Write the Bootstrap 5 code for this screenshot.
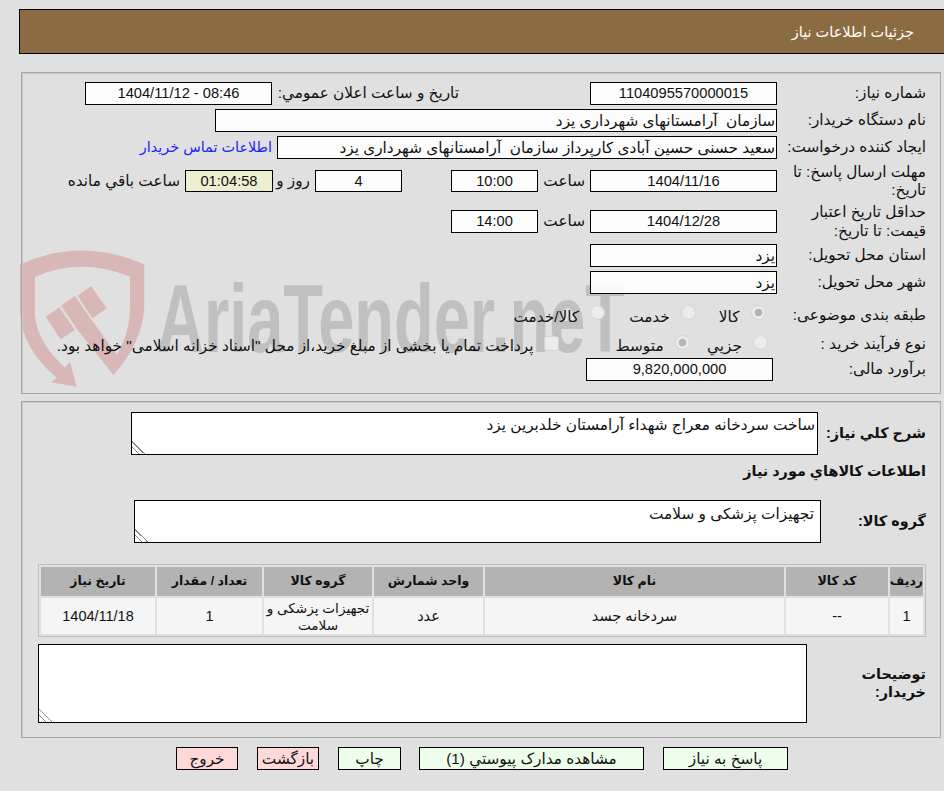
<!DOCTYPE html>
<html lang="fa" dir="rtl">
<head>
<meta charset="utf-8">
<title>جزئیات اطلاعات نیاز</title>
<link href="https://cdn.jsdelivr.net/npm/bootstrap@5.3.0/dist/css/bootstrap.min.css" rel="stylesheet">
<style>
html,body{background:#e0e0e0;overflow:hidden}
body{font-family:"Liberation Sans","DejaVu Sans",sans-serif;font-size:15.3px;color:#111;width:944px;height:791px;position:relative;line-height:18.5px}
.wm{position:absolute;left:0;top:0}
.page-wrap{position:relative;padding:9px 0 0 19px}
.head-bar{height:45px;background:#8b6b42;border:1px solid #000;border-right:0;color:#fff;padding:1px 30px 0 0;font-size:14.5px}
.pane{border:1px solid #a6a6a6;margin:18px 3px 0 2px;padding:9px 0 0 0;box-shadow:inset 1px 1px 0 #c8c8c8}
.pane-one{height:322px}
.pane-two{height:337px;margin-top:7px;padding-top:10px}
.fld{margin-bottom:4px;min-height:23px}
.lbl{width:163px;flex:none;padding-right:14px;padding-left:8px}
.box{height:23px;border:1px solid #000;background:rgba(255,255,255,.9);text-align:center;flex:none;line-height:21px;white-space:nowrap;overflow:hidden}
.box.rt{text-align:right;padding-right:1px}
.num{font-size:14.67px}
.w187{width:187px}.w87{width:87px}.w88{width:88px}
.w562{width:562px}.w500{width:500px}
.cnt{background:#eeeed1}
.tall{min-height:37px}
.tall.short{min-height:36px}
.short .lbl{line-height:18px}
.short .box{height:22px;line-height:20px}
.nw{white-space:nowrap}
.pub-l{margin-right:131px;white-space:nowrap}
.pub-b{margin:0 auto 0 63px}
.cnt-link{margin-right:5px;color:#2222ff;font-size:14.4px}
.hr-l{width:42px;margin:0 5px;white-space:nowrap}
.sp49{width:49px;flex:none}
.day-l{width:42px;flex:none;padding-right:5px;white-space:nowrap}
.rem-l{margin-right:5px;white-space:nowrap}
.pick{height:23px}
.pick-a{margin-top:10px}
.pick-b{margin-top:6px}
.budget{margin-top:-2px}
.b-box{margin-right:4px}
.rd{width:15px;height:15px;border-radius:50%;background:#ececec;border:1px solid #d4d4d4;flex:none;margin-top:-6px}
.pick-b .rd{margin-top:-4px}
.rd.on{background:radial-gradient(circle,#b4b4b4 0 3.5px,#ececec 4.2px)}
.sq{width:15px;height:15px;border-radius:3px;background:#ececec;border:1px solid #d4d4d4;flex:none;margin-top:-2px}
.rdt{margin-top:3px;white-space:nowrap}
.opts-a{margin-right:11.5px}
.opts-b{margin-right:9.5px}
.opts-a,.opts-b{gap:4px}
.ml7{margin-left:7px}.ml20{margin-left:20px}.ml19{margin-left:19px}.ml6{margin-left:6.5px}.ml13{margin-left:13.5px}.ml52{margin-left:52.5px}
.memo{border:1px solid #000;background:#fff;resize:both;overflow:hidden;flex:none;padding:3px 2px 2px}
.memo::-webkit-resizer{background:linear-gradient(45deg,transparent 0 21%,#888 21% 26%,transparent 26% 40%,#888 40% 45%,transparent 45%)}
.m-a{width:687px;height:43px}
.m-b{width:687px;height:43px;padding:4px 6px 2px 2px}
.m-c{width:769px;height:79px}
.lb2{font-weight:700;font-size:14.4px;padding-right:14px;flex:none;white-space:nowrap}
.lb-a{width:122px}
.lb-b{width:119px}
.lb-c{width:133px;padding-left:30px;white-space:normal}
.sec-t{margin-top:7px}
.grp{margin-top:19px}
.note{margin-top:7px}
.grid-t{border-collapse:separate;border-spacing:2px;border:1px solid #c0c0c0;width:888px;margin:21px 14px 0 0;table-layout:fixed}
.grid-t th{background:#b3b3b3;height:29px;text-align:center;font-size:12.5px;padding:0}
.grid-t td{background:#f5f5f5;height:36px;text-align:center;padding:2px 0 0;line-height:17px;font-size:14.5px}
.grid-t td.tight{font-size:13.6px}
.c1{width:33px}.c2{width:102px}.c3{width:299px}.c4{width:109px}.c5{width:108px}.c6{width:105px}.c7{width:114px}
.acts{margin-top:9px;padding:0 156px 0 0;gap:19px}
.act{height:23px;border:1px solid #000;border-radius:0;padding:1px 0 0;font-size:15.3px;line-height:20px;color:#111}
.act.ok,.act.ok:hover{background:#edfeea}
.act.no,.act.no:hover{background:#ffd9d9}
.a1{width:125px}.a2{width:225px}.a3{width:63px;margin-right:-1px}.a4,.a5{width:62px}
</style>
</head>
<body>
<svg class="wm" width="944" height="400" viewBox="0 0 944 400" aria-hidden="true">
  <g transform="translate(15 245) scale(.3333)" fill="#d9b7b7">
    <path d="M15 58Q200-25 388 58L388 180Q385 290 295 390L180 245 228 222 306 330Q345 260 345 190L345 95Q200 35 60 95L60 210Q65 290 150 368L165 350 185 425 108 412 125 398Q20 310 15 200Z"/>
    <path d="M92 215 133 187 180 255 137 283Z"/>
    <path d="M138 182 180 153 228 222 185 250Z"/>
    <path d="M188 152 228 123 275 190 232 220Z"/>
  </g>
  <text x="157" y="352" font-family="Liberation Sans" font-weight="700" font-size="96" fill="#c0c0c0" textLength="468" lengthAdjust="spacingAndGlyphs" direction="ltr" unicode-bidi="bidi-override">AriaTender.neT</text>
</svg>
<div class="page-wrap">
  <div class="head-bar d-flex align-items-center"><span>جزئیات اطلاعات نیاز</span></div>

  <div class="pane pane-one">
    <div class="d-flex align-items-center fld">
      <div class="lbl">شماره نیاز:</div>
      <div class="box w187 num">1104095570000015</div>
      <div class="pub-l">تاریخ و ساعت اعلان عمومي:</div>
      <div class="box w187 num pub-b" dir="ltr">1404/11/12 - 08:46</div>
    </div>
    <div class="d-flex align-items-center fld">
      <div class="lbl">نام دستگاه خریدار:</div>
      <div class="box rt w562">سازمان &nbsp;آرامستانهای شهرداری یزد</div>
    </div>
    <div class="d-flex align-items-center fld">
      <div class="lbl">ایجاد کننده درخواست:</div>
      <div class="box rt w500">سعید حسنی حسین آبادی کارپرداز سازمان &nbsp;آرامستانهای شهرداری یزد</div>
      <a href="#" class="text-decoration-none cnt-link nw">اطلاعات تماس خریدار</a>
    </div>
    <div class="d-flex align-items-center fld tall short">
      <div class="lbl">مهلت ارسال پاسخ: تا تاریخ:</div>
      <div class="box w187 num">1404/11/16</div>
      <div class="hr-l">ساعت</div>
      <div class="box w87 num">10:00</div>
      <div class="sp49"></div>
      <div class="box w87 num">4</div>
      <div class="day-l">روز و</div>
      <div class="box w88 cnt num">01:04:58</div>
      <div class="rem-l">ساعت باقي مانده</div>
    </div>
    <div class="d-flex align-items-center fld tall">
      <div class="lbl">حداقل تاریخ اعتبار قیمت: تا تاریخ:</div>
      <div class="box w187 num">1404/12/28</div>
      <div class="hr-l">ساعت</div>
      <div class="box w87 num">14:00</div>
    </div>
    <div class="d-flex align-items-center fld">
      <div class="lbl">استان محل تحویل:</div>
      <div class="box rt w187">یزد</div>
    </div>
    <div class="d-flex align-items-center fld">
      <div class="lbl">شهر محل تحویل:</div>
      <div class="box rt w187">یزد</div>
    </div>
    <div class="d-flex align-items-center fld pick pick-a">
      <div class="lbl">طبقه بندی موضوعی:</div>
      <div class="d-flex align-items-center opts-a">
        <span class="rd on ml7"></span><span class="rdt ml19">کالا</span>
        <span class="rd ml7"></span><span class="rdt ml20">خدمت</span>
        <span class="rd ml7"></span><span class="rdt">کالا/خدمت</span>
      </div>
    </div>
    <div class="d-flex align-items-center fld pick pick-b">
      <div class="lbl">نوع فرآیند خرید :</div>
      <div class="d-flex align-items-center opts-b">
        <span class="rd ml6"></span><span class="rdt ml13">جزيي</span>
        <span class="rd on ml7"></span><span class="rdt ml52">متوسط</span>
        <span class="sq ml6"></span><span class="rdt">پرداخت تمام یا بخشی از مبلغ خرید،از محل "اسناد خزانه اسلامی" خواهد بود.</span>
      </div>
    </div>
    <div class="d-flex align-items-center fld budget">
      <div class="lbl">برآورد مالی:</div>
      <div class="box w187 num b-box">9,820,000,000</div>
    </div>
  </div>

  <div class="pane pane-two">
    <div class="d-flex align-items-center">
      <div class="lb2 lb-a">شرح کلي نیاز:</div>
      <div class="memo m-a">ساخت سردخانه معراج شهداء آرامستان خلدبرین یزد</div>
    </div>
    <div class="lb2 sec-t">اطلاعات کالاهاي مورد نیاز</div>
    <div class="d-flex align-items-center grp">
      <div class="lb2 lb-b">گروه کالا:</div>
      <div class="memo m-b">تجهیزات پزشکی و سلامت</div>
    </div>
    <table class="grid-t">
      <colgroup><col class="c1"><col class="c2"><col class="c3"><col class="c4"><col class="c5"><col class="c6"><col class="c7"></colgroup>
      <thead><tr><th>ردیف</th><th>کد کالا</th><th>نام کالا</th><th>واحد شمارش</th><th>گروه کالا</th><th>تعداد / مقدار</th><th>تاریخ نیاز</th></tr></thead>
      <tbody><tr><td>1</td><td>--</td><td>سردخانه جسد</td><td>عدد</td><td class="tight">تجهیزات پزشکی و سلامت</td><td>1</td><td>1404/11/18</td></tr></tbody>
    </table>
    <div class="d-flex align-items-center note">
      <div class="lb2 lb-c">توضیحات خریدار:</div>
      <div class="memo m-c"></div>
    </div>
  </div>

  <div class="d-flex justify-content-start acts">
    <button type="button" class="btn act ok a1">پاسخ به نیاز</button>
    <button type="button" class="btn act ok a2">مشاهده مدارک پیوستي (1)</button>
    <button type="button" class="btn act ok a3">چاپ</button>
    <button type="button" class="btn act no a4">بازگشت</button>
    <button type="button" class="btn act no a5">خروج</button>
  </div>
</div>
<script src="https://cdn.jsdelivr.net/npm/bootstrap@5.3.0/dist/js/bootstrap.bundle.min.js"></script>
</body>
</html>
